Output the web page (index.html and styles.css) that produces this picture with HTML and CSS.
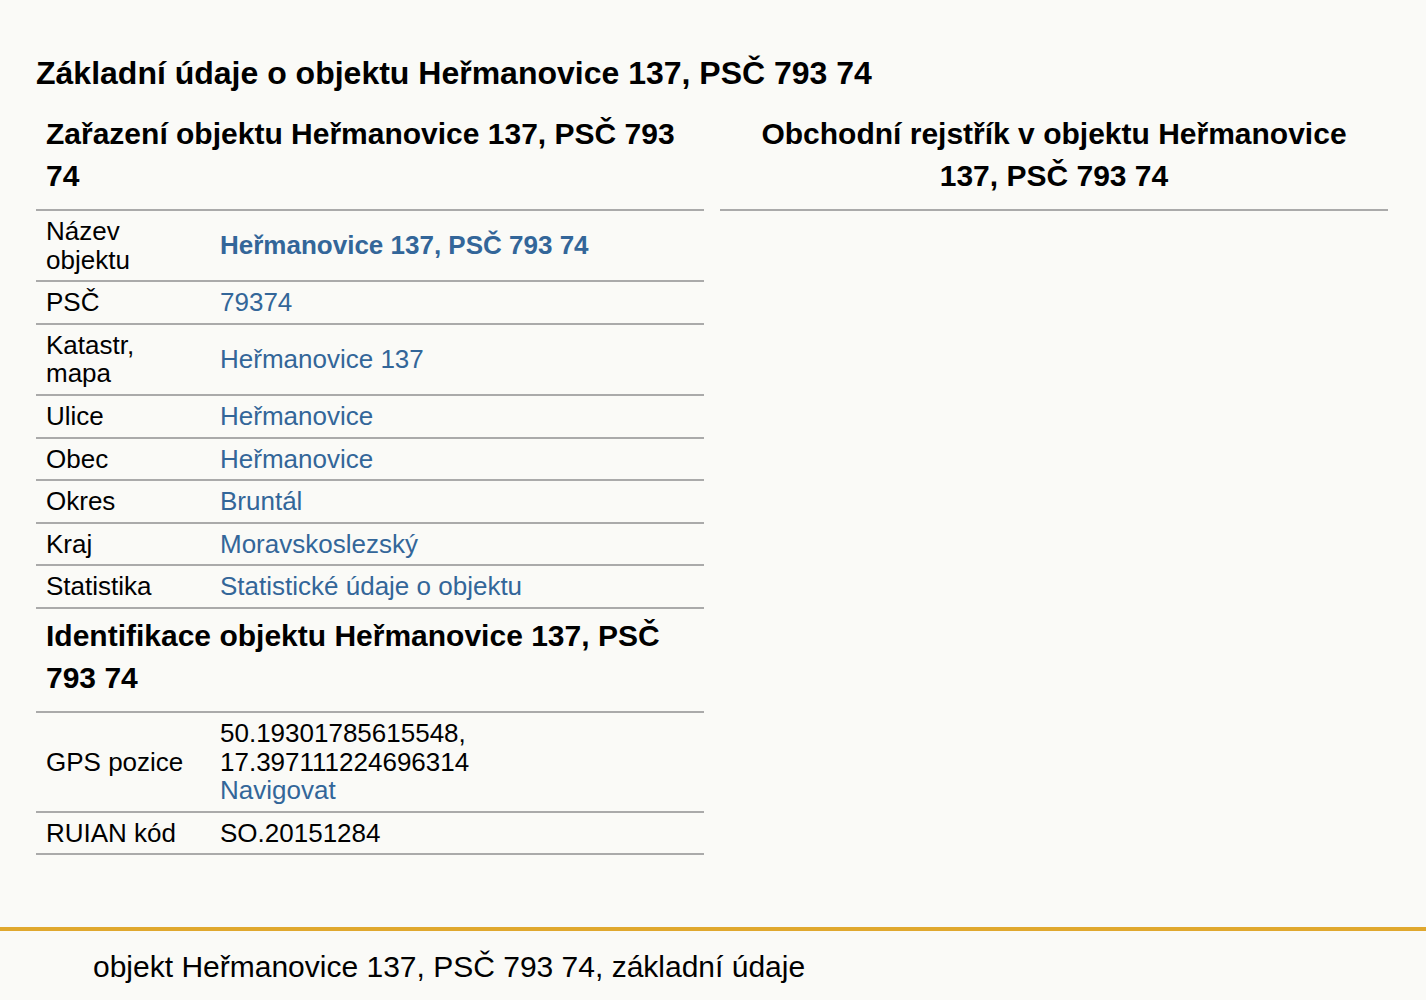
FILE: index.html
```html
<!DOCTYPE html>
<html lang="cs">
<head>
<meta charset="utf-8">
<title>objekt Heřmanovice 137, PSČ 793 74, základní údaje</title>
<link rel="stylesheet" href="styles.css">
</head>
<body>
<main class="page">
  <h1 class="title">Základní údaje o objektu Heřmanovice 137, PSČ 793 74</h1>
  <div class="cols">
    <section class="col">
      <h2 class="sec">Zařazení objektu Heřmanovice 137, PSČ 793 74</h2>
      <table class="info">
        <tr><td class="lbl">Název objektu</td><td class="val"><a class="lnk strong" href="#">Heřmanovice 137, PSČ 793 74</a></td></tr>
        <tr><td class="lbl">PSČ</td><td class="val"><a class="lnk" href="#">79374</a></td></tr>
        <tr><td class="lbl">Katastr, mapa</td><td class="val"><a class="lnk" href="#">Heřmanovice 137</a></td></tr>
        <tr><td class="lbl">Ulice</td><td class="val"><a class="lnk" href="#">Heřmanovice</a></td></tr>
        <tr><td class="lbl">Obec</td><td class="val"><a class="lnk" href="#">Heřmanovice</a></td></tr>
        <tr><td class="lbl">Okres</td><td class="val"><a class="lnk" href="#">Bruntál</a></td></tr>
        <tr><td class="lbl">Kraj</td><td class="val"><a class="lnk" href="#">Moravskoslezský</a></td></tr>
        <tr><td class="lbl">Statistika</td><td class="val"><a class="lnk" href="#">Statistické údaje o objektu</a></td></tr>
      </table>
      <h2 class="sec">Identifikace objektu Heřmanovice 137, PSČ 793 74</h2>
      <table class="info">
        <tr><td class="lbl">GPS pozice</td><td class="val">50.19301785615548,<br>17.397111224696314<br><a class="lnk" href="#">Navigovat</a></td></tr>
        <tr><td class="lbl">RUIAN kód</td><td class="val">SO.20151284</td></tr>
      </table>
    </section>
    <section class="col">
      <h2 class="sec center">Obchodní rejstřík v objektu Heřmanovice 137, PSČ 793 74</h2>
      <div class="rule"></div>
    </section>
  </div>
</main>
<footer class="foot">
  <p class="foot-text">objekt Heřmanovice 137, PSČ 793 74, základní údaje</p>
</footer>
</body>
</html>
```
FILE: styles.css
```css
html, body {
  margin: 0;
  padding: 0;
  background: #fafaf7;
  color: #000;
  font-family: "Liberation Sans", Arial, sans-serif;
}

.page {
  padding: 0 38px 0 36px;
}

.title {
  margin: 55px 0 17px;
  font-size: 32px;
  line-height: 37px;
  font-weight: bold;
}

.cols {
  display: grid;
  grid-template-columns: 668px 668px;
  column-gap: 16px;
  margin-bottom: 72px;
}

.sec {
  margin: 0;
  padding: 4px 10px 12px;
  font-size: 30px;
  line-height: 42px;
  font-weight: bold;
}

.info + .sec {
  margin-top: 2px;
}

.sec.center {
  text-align: center;
}

.rule {
  border-top: 2px solid #aaa;
}

.info {
  width: 100%;
  border-collapse: collapse;
  border-top: 2px solid #aaa;
  font-size: 26px;
  line-height: 1.1;
}

.info tr {
  border-bottom: 2px solid #aaa;
}

.info td {
  padding: 6px 10px;
  vertical-align: middle;
  text-align: left;
}

.lbl {
  width: 154px;
}

.lnk {
  color: #336699;
  text-decoration: none;
}

.lnk.strong {
  font-weight: bold;
}

.foot {
  border-top: 4px solid #e0a82e;
}

.foot-text {
  margin: 0;
  padding: 18px 0 0 93px;
  font-size: 30px;
  line-height: 35px;
}
```
